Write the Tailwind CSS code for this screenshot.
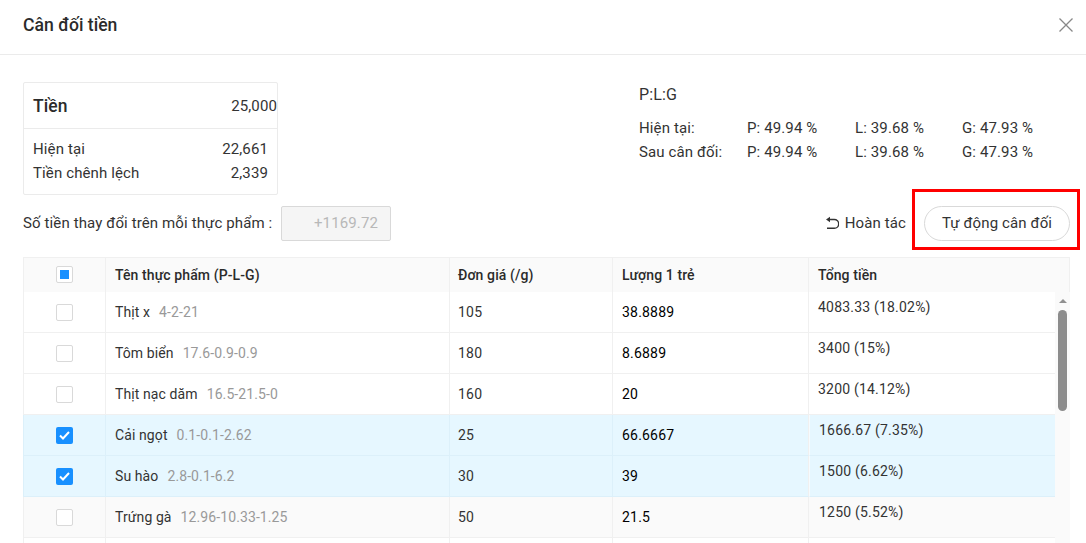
<!DOCTYPE html>
<html lang="vi">
<head>
<meta charset="UTF-8">
<title>Cân đối tiền</title>
<script src="https://cdn.jsdelivr.net/npm/@tailwindcss/browser@4"></script>
</head>
<body class="bg-white font-['Roboto',sans-serif] text-[15px] tracking-[0.12px] text-[#333] h-[543px] w-[1086px] overflow-hidden">
  <header class="h-[55px] border-b border-[#ebebeb] pl-[23px] pr-[13px] pb-[4px] flex items-center justify-between">
    <h1 class="text-[17.6px] tracking-normal font-medium text-[#2b2b2b]">Cân đối tiền</h1>
    <svg class="w-[14px] h-[14px] text-[#888]" viewBox="0 0 14 14" fill="none" stroke="currentColor" stroke-width="1.3"><path d="M.5.5l13 13M13.5.5l-13 13"/></svg>
  </header>

  <section class="flex pl-[23px] pt-[27px] h-[151px]">
    <div class="w-[255px] h-[113px] border border-[#ebebeb] rounded-[2px]">
      <div class="h-[46px] border-b border-[#ebebeb] pl-[9px] pt-[1px] flex items-center justify-between">
        <span class="text-[17.5px] font-medium text-[#2b2b2b]">Tiền</span><span>25,000</span>
      </div>
      <div class="px-[9px] pt-[8px] leading-[24px]">
        <div class="flex justify-between"><span>Hiện tại</span><span>22,661</span></div>
        <div class="flex justify-between"><span>Tiền chênh lệch</span><span>2,339</span></div>
      </div>
    </div>
    <div class="ml-[361px] pt-[1px] leading-[24px]">
      <div class="mb-[9px] text-[16px]">P:L:G</div>
      <div class="flex"><span class="w-[108px]">Hiện tại:</span><span class="w-[108px]">P: 49.94 %</span><span class="w-[107px]">L: 39.68 %</span><span>G: 47.93 %</span></div>
      <div class="flex"><span class="w-[108px]">Sau cân đối:</span><span class="w-[108px]">P: 49.94 %</span><span class="w-[107px]">L: 39.68 %</span><span>G: 47.93 %</span></div>
    </div>
  </section>

  <section class="flex items-center h-[34px] pl-[23px] pr-[16px]">
    <span class="w-[258px]">Số tiền thay đổi trên mỗi thực phẩm :</span>
    <div class="w-[110px] h-[35px] border border-[#d9d9d9] bg-[#f5f5f5] rounded-[2px] flex items-center justify-end pr-[12px] text-[#b8b8b8]">+1169.72</div>
    <div class="ml-auto flex items-center">
      <svg class="w-[14px] h-[14px] mr-[6px]" viewBox="0 0 14 14" fill="none" stroke="#333" stroke-width="1.4"><path d="M1 3.5L5 .8v5.4z" fill="#333" stroke="none"/><path d="M4 3.5h5.3a3.8 3.8 0 0 1 0 8.8H2"/></svg>
      <span>Hoàn tác</span>
      <div class="relative ml-[18px]">
        <button class="w-[146px] h-[35px] pt-[1px] rounded-full border border-[#d9d9d9] bg-white text-[#333]">Tự động cân đối</button>
        <div class="absolute -left-[12px] -top-[17px] w-[168px] h-[61px] border-[3px] border-[#f00]"></div>
      </div>
    </div>
  </section>

  <section class="mt-[17px] ml-[23px] w-[1047px] relative text-[14px] tracking-[0.2px]">
    <div class="grid grid-cols-[82px_344px_163px_196px_260px] h-[35px] bg-[#fafafa] border border-[#f0f0f0] border-b-0 font-medium tracking-[0.1px] text-[#2b2b2b] items-center">
      <div class="h-full pb-[1px] flex items-center justify-center border-r border-[#f0f0f0]">
        <span class="w-[17px] h-[17px] border border-[#d9d9d9] bg-white rounded-[2px] flex items-center justify-center"><span class="w-[9px] h-[9px] bg-[#1890ff]"></span></span>
      </div>
      <div class="h-full flex items-center pl-[9px] border-r border-[#f0f0f0]">Tên thực phẩm (P-L-G)</div>
      <div class="h-full flex items-center pl-[8px] border-r border-[#f0f0f0]">Đơn giá (/g)</div>
      <div class="h-full flex items-center pl-[9px] border-r border-[#f0f0f0]">Lượng 1 trẻ</div>
      <div class="h-full flex items-center pl-[9px]">Tổng tiền</div>
    </div>

    <div class="grid grid-cols-[83px_344px_163px_196px_246px] w-[1032px]">
      <div class="contents">
        <div class="h-[41px] flex items-center justify-center border-l border-r border-b border-[#f0f0f0]"><span class="w-[17px] h-[17px] border border-[#d9d9d9] bg-white rounded-[2px]"></span></div>
        <div class="h-[41px] flex items-center pl-[9px] border-r border-b border-[#f0f0f0] tracking-[0.1px]">Thịt x<span class="ml-[9px] text-[#999]">4-2-21</span></div>
        <div class="h-[41px] flex items-center pl-[8px] border-r border-b border-[#f0f0f0]">105</div>
        <div class="h-[41px] flex items-center pl-[9px] border-r border-b border-[#f0f0f0] text-black">38.8889</div>
        <div class="h-[41px] pl-[9px] pt-[5px] border-b border-[#f0f0f0]">4083.33 (18.02%)</div>
      </div>
      <div class="contents">
        <div class="h-[41px] flex items-center justify-center border-l border-r border-b border-[#f0f0f0]"><span class="w-[17px] h-[17px] border border-[#d9d9d9] bg-white rounded-[2px]"></span></div>
        <div class="h-[41px] flex items-center pl-[9px] border-r border-b border-[#f0f0f0] tracking-[0.1px]">Tôm biển<span class="ml-[9px] text-[#999]">17.6-0.9-0.9</span></div>
        <div class="h-[41px] flex items-center pl-[8px] border-r border-b border-[#f0f0f0]">180</div>
        <div class="h-[41px] flex items-center pl-[9px] border-r border-b border-[#f0f0f0] text-black">8.6889</div>
        <div class="h-[41px] pl-[9px] pt-[5px] border-b border-[#f0f0f0]">3400 (15%)</div>
      </div>
      <div class="contents">
        <div class="h-[41px] flex items-center justify-center border-l border-r border-b border-[#f0f0f0]"><span class="w-[17px] h-[17px] border border-[#d9d9d9] bg-white rounded-[2px]"></span></div>
        <div class="h-[41px] flex items-center pl-[9px] border-r border-b border-[#f0f0f0] tracking-[0.1px]">Thịt nạc dăm<span class="ml-[9px] text-[#999]">16.5-21.5-0</span></div>
        <div class="h-[41px] flex items-center pl-[8px] border-r border-b border-[#f0f0f0]">160</div>
        <div class="h-[41px] flex items-center pl-[9px] border-r border-b border-[#f0f0f0] text-black">20</div>
        <div class="h-[41px] pl-[9px] pt-[5px] border-b border-[#f0f0f0]">3200 (14.12%)</div>
      </div>
      <div class="contents">
        <div class="h-[41px] bg-[#e6f7ff] flex items-center justify-center border-l border-r border-b border-[#dcf0fa]"><span class="w-[17px] h-[17px] bg-[#1890ff] rounded-[2px] flex items-center justify-center"><svg class="w-[11px] h-[11px]" viewBox="0 0 11 11" fill="none" stroke="#fff" stroke-width="2"><path d="M1 5.5l3 3 6-6.5"/></svg></span></div>
        <div class="h-[41px] bg-[#e6f7ff] flex items-center pl-[9px] border-r border-b border-[#dcf0fa] tracking-[0.1px]">Cải ngọt<span class="ml-[9px] text-[#999]">0.1-0.1-2.62</span></div>
        <div class="h-[41px] bg-[#e6f7ff] flex items-center pl-[8px] border-r border-b border-[#dcf0fa]">25</div>
        <div class="h-[41px] bg-[#e6f7ff] flex items-center pl-[9px] border-r border-r-[#f0f0f0] border-b border-b-[#dcf0fa] text-black">66.6667</div>
        <div class="h-[41px] bg-[#e6f7ff] pl-[9px] pt-[5px] border-l border-l-[#f5fbff] border-b border-b-[#dcf0fa]">1666.67 (7.35%)</div>
      </div>
      <div class="contents">
        <div class="h-[41px] bg-[#e6f7ff] flex items-center justify-center border-l border-r border-b border-[#dcf0fa]"><span class="w-[17px] h-[17px] bg-[#1890ff] rounded-[2px] flex items-center justify-center"><svg class="w-[11px] h-[11px]" viewBox="0 0 11 11" fill="none" stroke="#fff" stroke-width="2"><path d="M1 5.5l3 3 6-6.5"/></svg></span></div>
        <div class="h-[41px] bg-[#e6f7ff] flex items-center pl-[9px] border-r border-b border-[#dcf0fa] tracking-[0.1px]">Su hào<span class="ml-[9px] text-[#999]">2.8-0.1-6.2</span></div>
        <div class="h-[41px] bg-[#e6f7ff] flex items-center pl-[8px] border-r border-b border-[#dcf0fa]">30</div>
        <div class="h-[41px] bg-[#e6f7ff] flex items-center pl-[9px] border-r border-r-[#f0f0f0] border-b border-b-[#dcf0fa] text-black">39</div>
        <div class="h-[41px] bg-[#e6f7ff] pl-[9px] pt-[5px] border-l border-l-[#f5fbff] border-b border-b-[#dcf0fa]">1500 (6.62%)</div>
      </div>
      <div class="contents">
        <div class="h-[41px] bg-[#fafafa] flex items-center justify-center border-l border-r border-b border-[#f0f0f0]"><span class="w-[17px] h-[17px] border border-[#d9d9d9] bg-white rounded-[2px]"></span></div>
        <div class="h-[41px] bg-[#fafafa] flex items-center pl-[9px] border-r border-b border-[#f0f0f0] tracking-[0.1px]">Trứng gà<span class="ml-[9px] text-[#999]">12.96-10.33-1.25</span></div>
        <div class="h-[41px] bg-[#fafafa] flex items-center pl-[8px] border-r border-b border-[#f0f0f0]">50</div>
        <div class="h-[41px] bg-[#fafafa] flex items-center pl-[9px] border-r border-b border-[#f0f0f0] text-black">21.5</div>
        <div class="h-[41px] bg-[#fafafa] pl-[10px] pt-[5px] border-b border-[#f0f0f0]">1250 (5.52%)</div>
      </div>
      <div class="contents">
        <div class="h-[5px] border-l border-r border-[#f0f0f0]"></div>
        <div class="h-[5px] border-r border-[#f0f0f0]"></div>
        <div class="h-[5px] border-r border-[#f0f0f0]"></div>
        <div class="h-[5px] border-r border-[#f0f0f0]"></div>
        <div class="h-[5px]"></div>
      </div>
    </div>

    <div class="absolute right-0 top-[35px] w-[15px] h-[251px] bg-[#fafafa]">
      <div class="mx-auto mt-[7px] w-0 h-0 border-x-[4px] border-x-transparent border-b-[4px] border-b-[#909090]"></div>
      <div class="ml-[3px] mt-[7px] w-[9px] h-[101px] rounded-full bg-[#8c8c8c]"></div>
    </div>
  </section>
</body>
</html>
